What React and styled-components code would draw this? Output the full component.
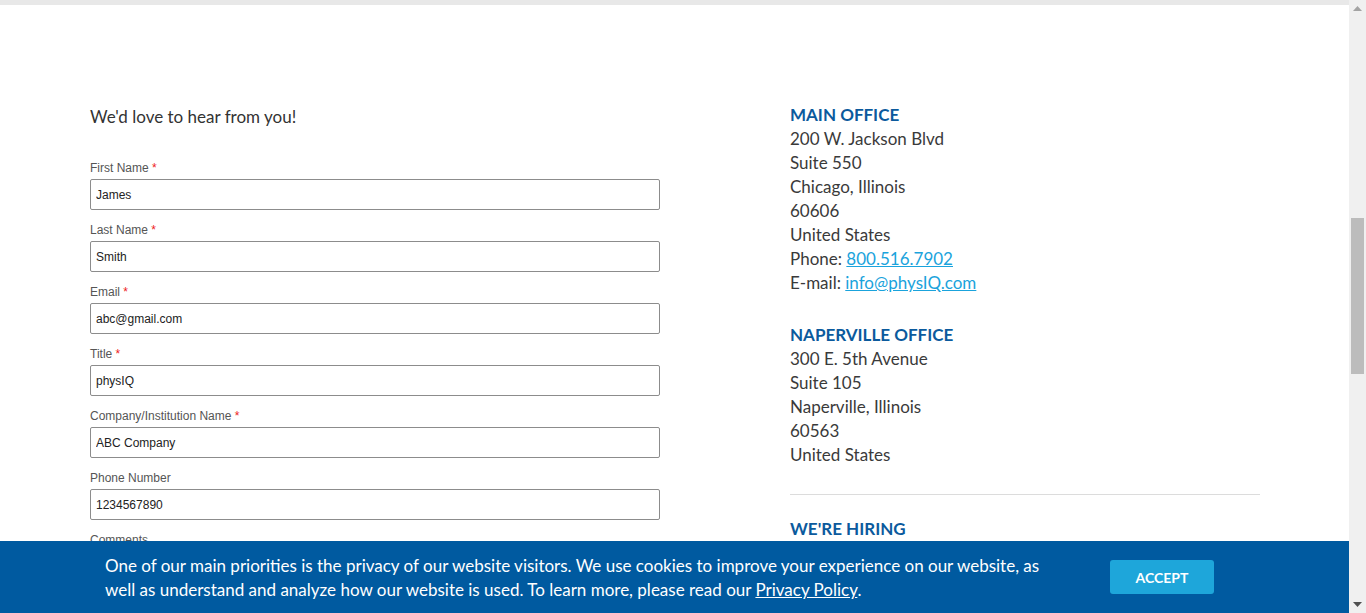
import React from 'react';
import styled, { createGlobalStyle } from 'styled-components';

const GlobalStyle = createGlobalStyle`
  html, body {
    margin: 0;
    height: 100%;
    overflow: hidden;
    background: #fff;
  }
  * { box-sizing: border-box; }
`;

const Page = styled.div`
  display: flex;
  height: 100vh;
  font-family: Lato, "Open Sans", sans-serif;
`;

const Main = styled.div`
  flex: 1;
  display: flex;
  flex-direction: column;
`;

const TopBar = styled.div`
  height: 5px;
  background: #e8e8e8;
`;

const Content = styled.div`
  display: grid;
  grid-template-columns: 570px 470px;
  column-gap: 130px;
  padding: 98px 0 0 90px;
`;

const FormCol = styled.div`
  padding-top: 2px;
`;

const Intro = styled.h2`
  margin: 0 0 31px;
  font-size: 17px;
  line-height: 24px;
  font-weight: 400;
  color: #333;
`;

const Field = styled.div`
  display: flex;
  flex-direction: column;
  gap: 3px;
  margin-bottom: 12px;
`;

const Label = styled.label`
  font-family: "Liberation Sans", Arial, sans-serif;
  font-size: 12px;
  line-height: 16px;
  color: #555;
`;

const Req = styled.span`
  color: #e22;
`;

const Input = styled.input`
  height: 31px;
  width: 100%;
  border: 1px solid #8c8c8c;
  border-radius: 2px;
  padding: 0 5px;
  font-family: "Liberation Sans", Arial, sans-serif;
  font-size: 12px;
  color: #222;
  background: #fff;
`;

const InfoCol = styled.div`
  font-size: 17px;
  line-height: 24px;
  color: #3a3a3a;
`;

const Office = styled.div`
  margin-top: ${p => p.$gap || 0}px;
`;

const Heading = styled.div`
  color: #0b5a9d;
  font-weight: 700;
  text-transform: uppercase;
`;

const Line = styled.div``;

const Link = styled.a`
  color: #1aa3dc;
  text-decoration: underline;
`;

const Rule = styled.hr`
  margin: 27px 0 22px;
  border: 0;
  border-top: 1px solid #dcdcdc;
`;

const Banner = styled.div`
  position: fixed;
  left: 0;
  right: 17px;
  bottom: 0;
  height: 72px;
  background: #005aa0;
  display: flex;
  align-items: center;
  padding-left: 105px;
  gap: 62px;
`;

const BannerText = styled.p`
  margin: 0;
  padding-top: 2px;
  width: 943px;
  color: #fff;
  font-size: 17px;
  line-height: 24px;
  a { color: #fff; text-decoration: underline; }
`;

const Accept = styled.button`
  width: 104px;
  height: 34px;
  border: 0;
  border-radius: 3px;
  background: #1ea6da;
  color: #fff;
  font-family: inherit;
  font-size: 14px;
  font-weight: 700;
  text-transform: uppercase;
`;

const Scrollbar = styled.div`
  width: 17px;
  background: #f0f0f0;
  display: flex;
  flex-direction: column;
  align-items: center;
`;

const Arrow = styled.div`
  height: 17px;
  width: 17px;
  display: flex;
  align-items: center;
  justify-content: center;
  margin-top: ${p => (p.$down ? 'auto' : '0')};
`;

const Thumb = styled.div`
  width: 13px;
  height: 156px;
  margin-top: 201px;
  background: #bcbcbc;
`;

const fields = [
  { label: 'First Name', value: 'James', req: true },
  { label: 'Last Name', value: 'Smith', req: true },
  { label: 'Email', value: 'abc@gmail.com', req: true },
  { label: 'Title', value: 'physIQ', req: true },
  { label: 'Company/Institution Name', value: 'ABC Company', req: true },
  { label: 'Phone Number', value: '1234567890' },
];

export default function App() {
  return (
    <Page>
      <GlobalStyle />
      <Main>
        <TopBar />
        <Content>
          <FormCol>
            <Intro>We'd love to hear from you!</Intro>
            {fields.map(f => (
              <Field key={f.label}>
                <Label>
                  {f.label}
                  {f.req && <Req> *</Req>}
                </Label>
                <Input defaultValue={f.value} />
              </Field>
            ))}
            <Field>
              <Label>Comments</Label>
            </Field>
          </FormCol>
          <InfoCol>
            <Office>
              <Heading>Main Office</Heading>
              <Line>200 W. Jackson Blvd</Line>
              <Line>Suite 550</Line>
              <Line>Chicago, Illinois</Line>
              <Line>60606</Line>
              <Line>United States</Line>
              <Line>Phone: <Link href="#">800.516.7902</Link></Line>
              <Line>E-mail: <Link href="#">info@physIQ.com</Link></Line>
            </Office>
            <Office $gap={28}>
              <Heading>Naperville Office</Heading>
              <Line>300 E. 5th Avenue</Line>
              <Line>Suite 105</Line>
              <Line>Naperville, Illinois</Line>
              <Line>60563</Line>
              <Line>United States</Line>
            </Office>
            <Rule />
            <Heading>We're Hiring</Heading>
          </InfoCol>
        </Content>
      </Main>
      <Scrollbar>
        <Arrow>
          <svg width="9" height="5" viewBox="0 0 9 5"><path d="M0 5 L4.5 0 L9 5 Z" fill="#a3a3a3" /></svg>
        </Arrow>
        <Thumb />
        <Arrow $down>
          <svg width="9" height="5" viewBox="0 0 9 5"><path d="M0 0 L9 0 L4.5 5 Z" fill="#505050" /></svg>
        </Arrow>
      </Scrollbar>
      <Banner>
        <BannerText>
          One of our main priorities is the privacy of our website visitors. We use cookies to improve your experience on our website, as well as understand and analyze how our website is used. To learn more, please read our <a href="#">Privacy Policy</a>.
        </BannerText>
        <Accept>Accept</Accept>
      </Banner>
    </Page>
  );
}
